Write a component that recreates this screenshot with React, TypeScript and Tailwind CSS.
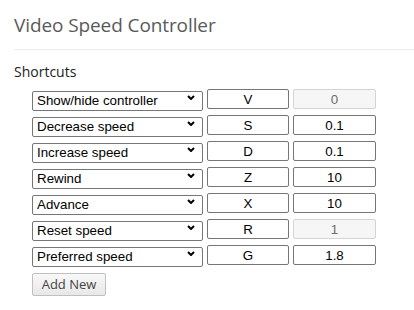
const actions = [
  "Show/hide controller",
  "Decrease speed",
  "Increase speed",
  "Rewind",
  "Advance",
  "Reset speed",
  "Preferred speed",
];

const shortcuts = [
  { action: "Show/hide controller", key: "V", value: "0", disabled: true },
  { action: "Decrease speed", key: "S", value: "0.1" },
  { action: "Increase speed", key: "D", value: "0.1" },
  { action: "Rewind", key: "Z", value: "10" },
  { action: "Advance", key: "X", value: "10" },
  { action: "Reset speed", key: "R", value: "1", disabled: true },
  { action: "Preferred speed", key: "G", value: "1.8" },
];

const inputBase =
  "h-[20px] rounded-[2px] text-center text-[13.33px] font-['Liberation_Sans',Arial,sans-serif] outline-none";

const ShortcutRow = ({ action, keyName, value, disabled }: { action: string; keyName: string; value: string; disabled?: boolean }) => (
  <div className="flex items-center gap-[4px] h-[20px]">
    <div className="relative">
      <select
        defaultValue={action}
        className="appearance-none w-[171px] h-[20px] border border-[#767676] rounded-[2px] bg-white pl-[4px] text-[13.33px] leading-[18px] text-black font-['Liberation_Sans',Arial,sans-serif] outline-none"
      >
        {actions.map((a) => (
          <option key={a}>{a}</option>
        ))}
      </select>
      {/* dropdown arrow */}
      <svg className="absolute right-[8px] top-[8px] pointer-events-none" width="8" height="5" viewBox="0 0 8 5">
        <polyline points="1,1 4,4 7,1" fill="none" stroke="#000" strokeWidth="2" />
      </svg>
    </div>
    <input readOnly value={keyName} className={`w-[82px] border border-[#767676] bg-white text-black ${inputBase}`} />
    <input
      readOnly
      disabled={disabled}
      value={value}
      className={
        disabled
          ? `w-[83px] border border-[#d4d4d4] bg-[#f6f6f6] text-[#6d6d6d] ${inputBase}`
          : `w-[83px] border border-[#767676] bg-white text-black ${inputBase}`
      }
    />
  </div>
);

export default function App() {
  return (
    <div className="w-[414px] h-[310px] bg-white overflow-hidden pl-[14px] pt-[12px] font-['Open_Sans',sans-serif]">
      {/* Header */}
      <h1 className="text-[19px] leading-[26px] text-[#5a5a5a] font-normal tracking-[-0.1px]">Video Speed Controller</h1>
      <hr className="mt-[11px] border-t border-[#ececec]" />

      {/* Shortcuts */}
      <h3 className="mt-[12px] text-[14px] leading-[20px] text-[#222]">Shortcuts</h3>
      <div className="mt-[7px] pl-[18px] flex flex-col gap-[6px]">
        {shortcuts.map((s) => (
          <ShortcutRow key={s.action} action={s.action} keyName={s.key} value={s.value} disabled={s.disabled} />
        ))}
        <div>
          <button className="mt-[1px] h-[23px] w-[74px] border border-[#c0c0c0] rounded-[2px] bg-gradient-to-b from-[#f8f8f8] to-[#e8e8e8] text-[13px] text-[#444] font-['Open_Sans',sans-serif]">
            Add New
          </button>
        </div>
      </div>
    </div>
  );
}
